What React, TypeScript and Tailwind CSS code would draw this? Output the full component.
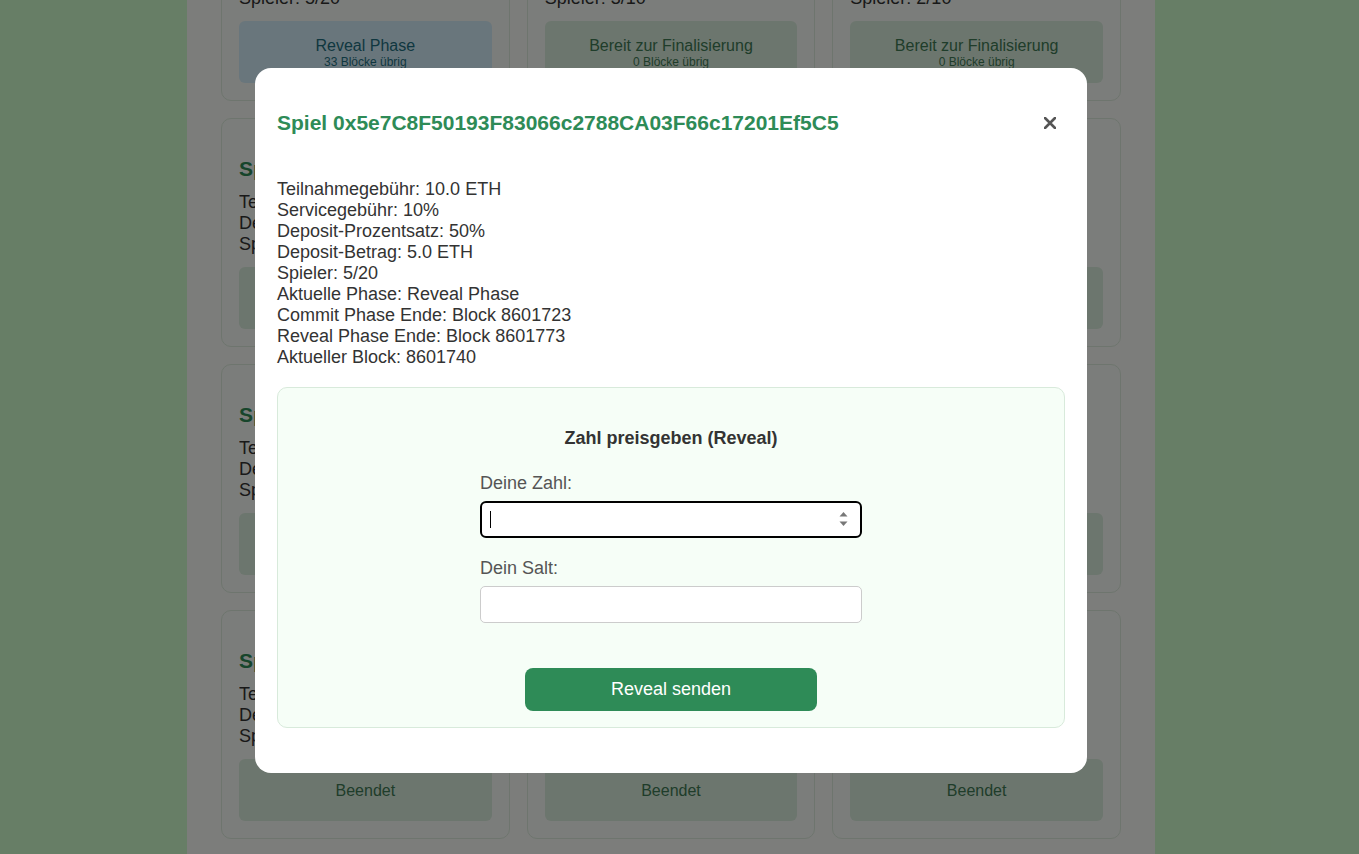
import React from "react";

type Game = {
  title: string;
  lines: string[];
  status: string;
  sub?: string;
  tone: "reveal" | "ready" | "done";
};

const games: Game[] = [
  { title: "Spiel 0x5e7C...f5C5", lines: ["Teilnahmegebühr: 10.0 ETH", "Deposit: 50%", "Spieler: 5/20"], status: "Reveal Phase", sub: "33 Blöcke übrig", tone: "reveal" },
  { title: "Spiel 0x91aB...7d20", lines: ["Teilnahmegebühr: 1.0 ETH", "Deposit: 20%", "Spieler: 3/10"], status: "Bereit zur Finalisierung", sub: "0 Blöcke übrig", tone: "ready" },
  { title: "Spiel 0x3Fd2...a1B9", lines: ["Teilnahmegebühr: 2.0 ETH", "Deposit: 30%", "Spieler: 2/10"], status: "Bereit zur Finalisierung", sub: "0 Blöcke übrig", tone: "ready" },
  { title: "Spiel 0x7C44...E0a3", lines: ["Teilnahmegebühr: 0.5 ETH", "Deposit: 10%", "Spieler: 4/10"], status: "Beendet", tone: "done" },
  { title: "Spiel 0xA02e...6b1F", lines: ["Teilnahmegebühr: 1.5 ETH", "Deposit: 25%", "Spieler: 6/10"], status: "Beendet", tone: "done" },
  { title: "Spiel 0x1bC9...42Dd", lines: ["Teilnahmegebühr: 3.0 ETH", "Deposit: 40%", "Spieler: 10/10"], status: "Beendet", tone: "done" },
  { title: "Spiel 0xD5f0...9e7A", lines: ["Teilnahmegebühr: 0.1 ETH", "Deposit: 50%", "Spieler: 2/5"], status: "Beendet", tone: "done" },
  { title: "Spiel 0x68Ea...c3B0", lines: ["Teilnahmegebühr: 5.0 ETH", "Deposit: 20%", "Spieler: 8/20"], status: "Beendet", tone: "done" },
  { title: "Spiel 0x0f3A...71cE", lines: ["Teilnahmegebühr: 1.0 ETH", "Deposit: 10%", "Spieler: 3/3"], status: "Beendet", tone: "done" },
  { title: "Spiel 0xB7d1...0aF4", lines: ["Teilnahmegebühr: 2.5 ETH", "Deposit: 30%", "Spieler: 7/10"], status: "Beendet", tone: "done" },
  { title: "Spiel 0x44c8...D9e2", lines: ["Teilnahmegebühr: 0.2 ETH", "Deposit: 50%", "Spieler: 5/5"], status: "Beendet", tone: "done" },
  { title: "Spiel 0xE93b...15Ac", lines: ["Teilnahmegebühr: 4.0 ETH", "Deposit: 15%", "Spieler: 9/12"], status: "Beendet", tone: "done" },
];

const info = [
  "Teilnahmegebühr: 10.0 ETH",
  "Servicegebühr: 10%",
  "Deposit-Prozentsatz: 50%",
  "Deposit-Betrag: 5.0 ETH",
  "Spieler: 5/20",
  "Aktuelle Phase: Reveal Phase",
  "Commit Phase Ende: Block 8601723",
  "Reveal Phase Ende: Block 8601773",
  "Aktueller Block: 8601740",
];

function StatusBox({ g }: { g: Game }) {
  const box =
    g.tone === "reveal"
      ? "bg-[#d2ecf8] text-[#1f6f80]"
      : "bg-[#d8ecdc] text-[#3f7a55]";
  return (
    <div className={`mt-[12px] h-[62px] rounded-[6px] flex flex-col items-center justify-center ${box}`}>
      <div className="text-[16px] leading-[19px]">{g.status}</div>
      {g.sub && <div className="text-[12px] leading-[14px]">{g.sub}</div>}
    </div>
  );
}

function GameCard({ g }: { g: Game }) {
  return (
    <div className="rounded-[10px] border border-[#dcebdc] bg-[#f7fbf6] p-[17px]">
      <h3 className="mt-[21px] mb-[11px] text-[21px] leading-[24px] font-bold text-[#2e8b57] whitespace-nowrap overflow-hidden">
        {g.title}
      </h3>
      <div className="text-[18px] leading-[21px] text-[#333]">
        {g.lines.map((l) => (
          <div key={l} className="whitespace-nowrap overflow-hidden">{l}</div>
        ))}
      </div>
      <StatusBox g={g} />
    </div>
  );
}

export default function App() {
  return (
    <div
      className="relative h-[854px] overflow-hidden bg-[#cefccd]"
      style={{ fontFamily: '"Liberation Sans", Arial, sans-serif' }}
    >
      {/* page behind the dialog, scrolled */}
      <div className="flex justify-center pr-[17px] h-full">
        <div className="w-[968px] h-full bg-[#f9faf7] px-[34px]">
          <div className="-mt-[128px] grid grid-cols-3 gap-x-[17px] gap-y-[17px]">
            {games.map((g, i) => (
              <GameCard key={i} g={g} />
            ))}
          </div>
        </div>
      </div>

      {/* Overlay + dialog */}
      <div className="absolute inset-0 bg-black/50">
        <div className="flex justify-center pr-[17px] pt-[68px]">
          <div className="w-[832px] bg-white rounded-[16px] px-[22px] pt-[43px] pb-[45px]">
            <div className="flex items-center justify-between">
              <h2 className="text-[21px] leading-[24px] font-bold text-[#2e8b57]">
                Spiel 0x5e7C8F50193F83066c2788CA03F66c17201Ef5C5
              </h2>
              <button className="w-[30px] h-[24px] flex items-center justify-center" aria-label="Schließen">
                <svg width="12" height="12" viewBox="0 0 12 12">
                  <path d="M1 1 L11 11 M11 1 L1 11" stroke="#555" strokeWidth="2.6" strokeLinecap="round" />
                </svg>
              </button>
            </div>

            <div className="mt-[44px] text-[18px] leading-[21px] text-[#333]">
              {info.map((l) => (
                <div key={l}>{l}</div>
              ))}
            </div>

            <div className="mt-[19px] rounded-[10px] border border-[#d8eadb] bg-[#f6fef7] pt-[40px] pb-[16px]">
              <h4 className="text-center text-[18px] leading-[21px] font-bold text-[#333]">
                Zahl preisgeben (Reveal)
              </h4>
              <div className="w-[382px] mx-auto">
                <label className="block mt-[24px] text-[18px] leading-[21px] text-[#555]">Deine Zahl:</label>
                <div className="relative mt-[7px]">
                  <input
                    type="text"
                    readOnly
                    className="block w-full h-[37px] rounded-[6px] border-2 border-black bg-white outline-none"
                  />
                  <span className="absolute left-[10px] top-[10px] w-[1px] h-[17px] bg-black" />
                  <svg className="absolute left-[359px] top-[11px]" width="9" height="15" viewBox="0 0 9 15">
                    <path d="M4.5 0 L8.5 4.5 L0.5 4.5 Z" fill="#777" />
                    <path d="M0.5 9.5 L8.5 9.5 L4.5 14 Z" fill="#777" />
                  </svg>
                </div>
                <label className="block mt-[20px] text-[18px] leading-[21px] text-[#555]">Dein Salt:</label>
                <input
                  type="text"
                  readOnly
                  className="block mt-[7px] w-full h-[37px] rounded-[5px] border border-[#ccc] bg-white outline-none"
                />
              </div>
              <button className="block mx-auto mt-[45px] w-[292px] h-[43px] rounded-[8px] bg-[#2e8b57] text-white text-[18px]">
                Reveal senden
              </button>
            </div>
          </div>
        </div>
      </div>
    </div>
  );
}
